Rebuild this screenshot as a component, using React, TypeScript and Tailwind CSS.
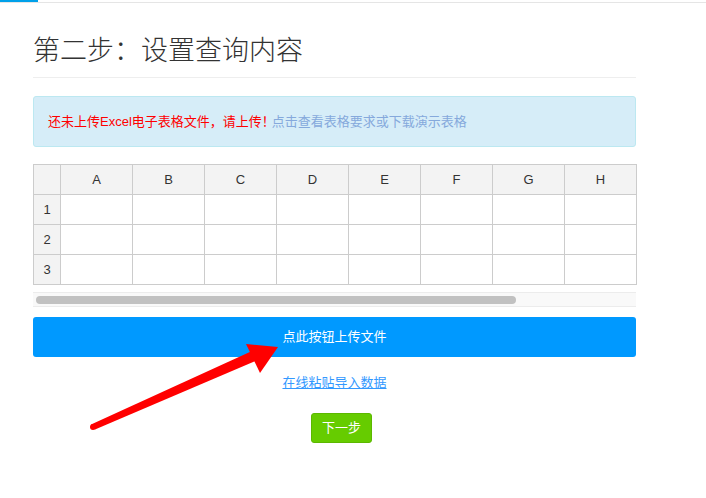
import React from 'react';

const COLS = ['A', 'B', 'C', 'D', 'E', 'F', 'G', 'H'];
const ROWS = [1, 2, 3];

const cjk = { fontFamily: '"Liberation Sans", "Noto Sans CJK SC", sans-serif' };
const latin = { fontFamily: '"Liberation Sans", Arial, sans-serif' };

function Sheet() {
  const cell = 'flex h-[30px] items-center justify-center border-b border-r border-[#cccccc]';
  return (
    <div
      className="grid w-[604px] grid-cols-[27px_repeat(8,72px)] border-l border-t border-[#cccccc] text-[13px] text-[#333]"
      style={latin}
    >
      <div className={`${cell} bg-[#f3f3f3]`} />
      {COLS.map((c) => (
        <div key={c} className={`${cell} bg-[#f3f3f3]`}>
          {c}
        </div>
      ))}
      {ROWS.map((r) => (
        <React.Fragment key={r}>
          <div className={`${cell} bg-[#f3f3f3]`}>{r}</div>
          {COLS.map((c) => (
            <div key={c} className={`${cell} bg-white`} />
          ))}
        </React.Fragment>
      ))}
    </div>
  );
}

function Arrow() {
  // red annotation arrow drawn over the page
  return (
    <svg className="pointer-events-none absolute left-0 top-0" width="706" height="498">
      <polygon points="91,424.5 95,429.5 258,360 252,351" fill="#ff0000" />
      <circle cx="93" cy="427" r="3" fill="#ff0000" />
      <polygon points="278,347 246,344 260,373" fill="#ff0000" />
    </svg>
  );
}

export default function App() {
  return (
    <div className="relative h-[498px] w-[706px] overflow-hidden bg-white" style={cjk}>
      {/* top tab line */}
      <div className="h-[2px] w-[38px] bg-[#00a0e9]" />
      <div className="h-px w-full bg-[#e5e5e5]" />

      <div className="ml-[33px] w-[603px]">
        {/* Title */}
        <div className="mt-[28px] border-b border-[#eeeeee] pb-[6px]">
          <h1 className="text-[27px] font-light leading-[40px] text-[#333]">第二步：设置查询内容</h1>
        </div>

        {/* Notice */}
        <div className="mt-[18px] flex h-[51px] items-center rounded-[3px] border border-[#bce8f1] bg-[#d6edf8] px-[14px] text-[13px]">
          <span className="text-[#ff0000]">还未上传Excel电子表格文件，请上传！</span>
          <a className="-ml-[3px] cursor-pointer text-[#85a9dc]">点击查看表格要求或下载演示表格</a>
        </div>

        {/* Spreadsheet */}
        <div className="mt-[17px]">
          <Sheet />
        </div>

        {/* horizontal scrollbar */}
        <div className="mt-[7px] flex h-[15px] items-center border-y border-[#ececec] bg-[#f9f9f9] pl-[3px]">
          <div className="h-[8px] w-[480px] rounded-full bg-[#c1c1c1]" />
        </div>

        {/* Upload button */}
        <button className="mt-[10px] flex h-[40px] w-full items-center justify-center rounded-[3px] bg-[#0099ff] text-[13px] text-white">
          点此按钮上传文件
        </button>

        {/* Paste link */}
        <div className="mt-[16px] flex justify-center">
          <a className="cursor-pointer text-[13px] leading-[20px] text-[#3399ff] underline">在线粘贴导入数据</a>
        </div>

        {/* Next */}
        <div className="mt-[20px] flex justify-center pl-[14px]">
          <button className="h-[30px] rounded-[3px] border border-[#5cb800] bg-[#66cc00] px-[10px] text-[13px] text-white">
            下一步
          </button>
        </div>
      </div>

      <Arrow />
    </div>
  );
}
